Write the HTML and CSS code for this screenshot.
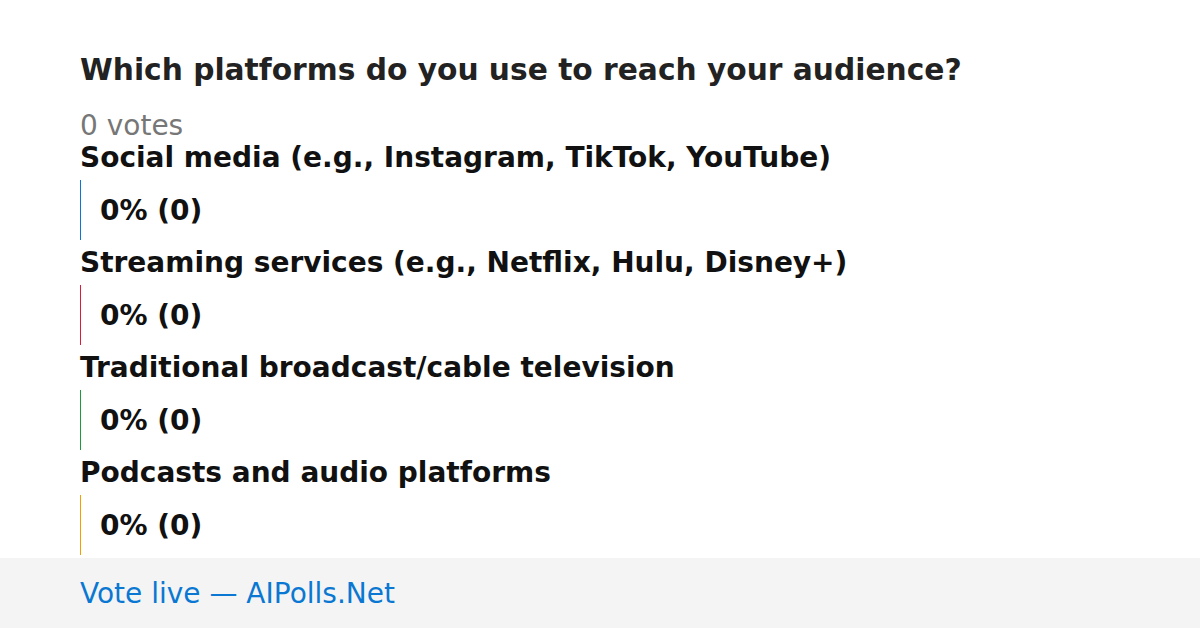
FILE: index.html
```html
<!DOCTYPE html>
<html lang="en">
<head>
  <meta charset="UTF-8" />
  <title>Which platforms do you use to reach your audience?</title>
  <link rel="stylesheet" href="styles.css">
</head>
<body>
  <div class="poll">
    <h1>Which platforms do you use to reach your audience?</h1>
    <div class="total">0 votes</div>

    <div class="option">
      <div class="label">Social media (e.g., Instagram, TikTok, YouTube)</div>
      <div class="bar blue"><span>0% (0)</span></div>
    </div>
    <div class="option">
      <div class="label">Streaming services (e.g., Netflix, Hulu, Disney+)</div>
      <div class="bar red"><span>0% (0)</span></div>
    </div>
    <div class="option">
      <div class="label">Traditional broadcast/cable television</div>
      <div class="bar green"><span>0% (0)</span></div>
    </div>
    <div class="option">
      <div class="label">Podcasts and audio platforms</div>
      <div class="bar orange"><span>0% (0)</span></div>
    </div>
  </div>

  <div class="footer">Vote live — AIPolls.Net</div>
</body>
</html>
```

FILE: styles.css
```css
body {
  margin: 0;
  font-family: "DejaVu Sans", sans-serif;
  background: #fff;
  color: #111;
  height: 628px;
  display: flex;
  flex-direction: column;
  overflow: hidden;
}

.poll {
  flex: 1;
  padding: 52px 80px 0;
}

h1 {
  margin: 0;
  font-size: 29.7px;
  line-height: 36px;
  color: #222;
}

.total {
  margin-top: 22px;
  font-size: 28px;
  line-height: 32px;
  color: #777;
}

.label {
  font-size: 28px;
  font-weight: bold;
  line-height: 32px;
}

.option {
  margin-bottom: 7px;
}

.option:last-child {
  margin-bottom: 0;
}

.bar {
  height: 60px;
  margin-top: 6px;
  border-left: 1px solid;
  padding-left: 19px;
  display: flex;
  align-items: center;
  font-size: 28px;
  font-weight: bold;
}

.blue { border-color: #0a78d2; }
.red { border-color: #e0193a; }
.green { border-color: #1c9a40; }
.orange { border-color: #f59c00; }

.footer {
  height: 70px;
  flex-shrink: 0;
  background: #f4f4f4;
  padding-left: 80px;
  display: flex;
  align-items: center;
  font-size: 28px;
  color: #0a78d2;
}
```
